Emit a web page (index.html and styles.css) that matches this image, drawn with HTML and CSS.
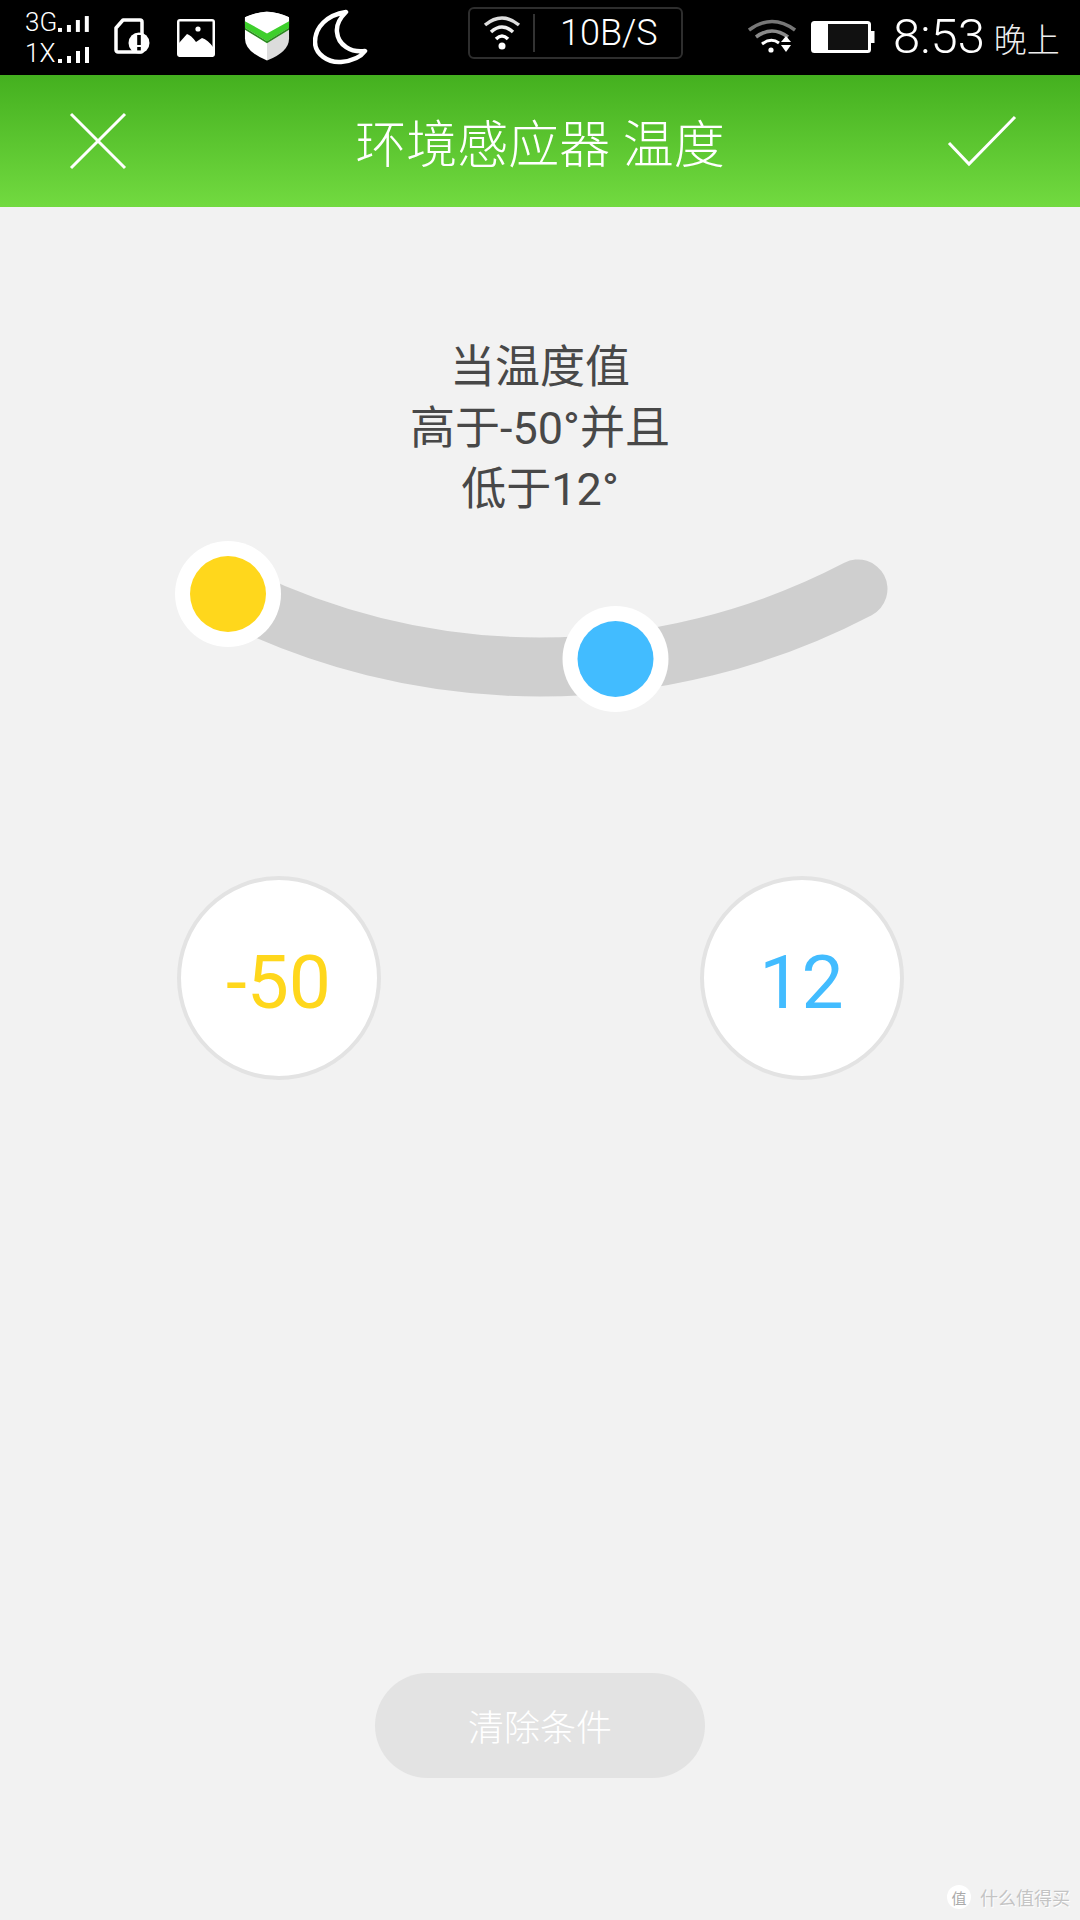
FILE: index.html
```html
<!DOCTYPE html>
<html lang="zh-CN">
<head>
    <meta charset="UTF-8">
    <meta name="viewport" content="width=device-width, initial-scale=1.0">
    <title>环境感应器 温度</title>
    <link rel="stylesheet" href="styles.css">
</head>
<body>
    <!-- Status bar -->
    <div class="statusbar">
        <div class="signal">
            <div class="signal-row">
                <span class="signal-name">3G</span>
                <svg class="signal-bars" width="34" height="18" viewBox="0 0 34 18"><rect x="1" y="13" width="4" height="4" fill="#fff"/><rect x="10" y="10" width="4" height="7" fill="#fff"/><rect x="19" y="5" width="4" height="12" fill="#fff"/><rect x="28" y="1" width="4" height="16" fill="#fff"/></svg>
            </div>
            <div class="signal-row">
                <span class="signal-name">1X</span>
                <svg class="signal-bars" width="34" height="18" viewBox="0 0 34 18"><rect x="1" y="13" width="4" height="4" fill="#fff"/><rect x="10" y="10" width="4" height="7" fill="#fff"/><rect x="19" y="5" width="4" height="12" fill="#fff"/><rect x="28" y="1" width="4" height="16" fill="#fff"/></svg>
            </div>
        </div>

        <svg class="ico-sd" width="36" height="36" viewBox="0 0 36 36">
            <path d="M9 2H26a2 2 0 0 1 2 2V33a1 1 0 0 1-1 1H4a2 2 0 0 1-2-2V10Z" fill="none" stroke="#fff" stroke-width="3.5" stroke-linejoin="round"/>
            <circle cx="25" cy="25" r="10.5" fill="#fff"/>
            <rect x="23.2" y="17" width="3.6" height="10" fill="#000"/>
            <rect x="23.2" y="29" width="3.6" height="3.4" fill="#000"/>
        </svg>

        <svg class="ico-pic" width="40" height="40" viewBox="0 0 40 40">
            <rect x="1" y="1" width="38" height="38" rx="3" fill="#fff"/>
            <rect x="3.5" y="3.5" width="33" height="33" fill="#000"/>
            <path d="M3 25 L11 16 Q15 17 20 24 L26 20 Q32 22 37 29 V39 H3Z" fill="#fff"/>
            <circle cx="22" cy="11" r="2.6" fill="#fff"/>
        </svg>

        <svg class="ico-shield" width="46" height="53" viewBox="0 0 48 54">
            <path d="M24 2 Q36 3 47 8 V30 Q47 44 24 53 Z" fill="#dcdcdc"/>
            <path d="M24 2 Q12 3 1 8 V30 Q1 44 24 53 Z" fill="#fff"/>
            <path d="M1 8 Q24 -3 47 8 V15 L24 28 L1 15 Z" fill="#fff"/>
            <path d="M1 12 L24 25 L47 12 V19 L24 33 L1 19 Z" fill="#3ecf2c"/>
            <path d="M1 19 L24 33 L47 19 V21 L24 35 L1 21 Z" fill="#2a8a1e"/>
        </svg>

        <svg class="ico-moon" width="56" height="56" viewBox="0 0 56 56">
            <path d="M33 3 C14 6 2 18 2 33 C2 45 15 54 28 53 C38 52 47 49 52 42 C38 44 25 36 24 23 C23 15 28 8 33 3 Z" fill="none" stroke="#fff" stroke-width="4.5" stroke-linejoin="round"/>
        </svg>

        <!-- Network speed box -->
        <div class="speed-box">
            <svg class="ico-wifi" width="40" height="38" viewBox="0 0 40 38">
                <path d="M3 11 Q20 -3 37 11" fill="none" stroke="#ddd" stroke-width="3.5"/>
                <path d="M9 18 Q20 8 31 18" fill="none" stroke="#eee" stroke-width="3.5"/>
                <path d="M14 25 Q20 19 26 25" fill="none" stroke="#fff" stroke-width="3.5"/>
                <circle cx="20" cy="32" r="3.5" fill="#fff"/>
            </svg>
            <span class="speed-line"></span>
            <span class="speed-text">10B/S</span>
        </div>

        <svg class="ico-wifi2" width="48" height="36" viewBox="0 0 48 36">
            <path d="M1 11 Q24 -6 47 11" fill="none" stroke="#777" stroke-width="3.5"/>
            <path d="M8 18 Q24 6 40 18" fill="none" stroke="#8a8a8a" stroke-width="3.5"/>
            <path d="M14 25 Q23 18 31 24" fill="none" stroke="#fff" stroke-width="3"/>
            <circle cx="23" cy="31" r="2.6" fill="#fff"/>
            <path d="M38 17 L43 23 H33 Z" fill="#fff"/>
            <path d="M33 26 H43 L38 33 Z" fill="#fff"/>
        </svg>

        <svg class="ico-battery" width="64" height="32" viewBox="0 0 64 32">
            <rect x="1.5" y="1.5" width="57" height="29" rx="2" fill="#111" stroke="#fff" stroke-width="3"/>
            <rect x="3" y="3" width="14" height="26" fill="#fff"/>
            <rect x="60" y="10" width="3.5" height="12" fill="#fff"/>
        </svg>

        <span class="clock">8:53</span>
        <span class="clock-ampm">晚上</span>
    </div>

    <!-- Title bar -->
    <div class="titlebar">
        <svg class="title-icon" width="58" height="58" viewBox="0 0 58 58">
            <path d="M2 2 L56 56 M56 2 L2 56" stroke="#fff" stroke-width="3" fill="none"/>
        </svg>
        <h1>环境感应器 温度</h1>
        <svg class="title-icon" width="70" height="52" viewBox="0 0 70 52">
            <path d="M2 28 L22 49 L68 2" stroke="#fff" stroke-width="3" fill="none"/>
        </svg>
    </div>

    <!-- Main content -->
    <div class="content">
        <p class="desc">当温度值<br>高于-50°并且<br>低于12°</p>

        <svg class="range" width="1080" height="199" viewBox="0 519 1080 199">
            <path d="M222 588 A687 687 0 0 0 858 588" fill="none" stroke="#cfcfcf" stroke-width="59" stroke-linecap="round"/>
            <circle cx="228" cy="593" r="53" fill="#fff"/>
            <circle cx="228" cy="593" r="38" fill="#ffd71c"/>
            <circle cx="615.5" cy="658" r="53" fill="#fff"/>
            <circle cx="615.5" cy="658" r="38" fill="#42bcff"/>
        </svg>

        <div class="values">
            <div class="value low">-50</div>
            <div class="value high">12</div>
        </div>

        <button class="btn-clear">清除条件</button>
    </div>

    <!-- Watermark -->
    <div class="watermark">
        <span class="watermark-logo">值</span>
        <span>什么值得买</span>
    </div>
</body>
</html>
```

FILE: styles.css
```css
* {
    margin: 0;
    padding: 0;
    box-sizing: border-box;
}

body {
    position: relative;
    width: 1080px;
    height: 1920px;
    overflow: hidden;
    font-family: Roboto, "Noto Sans CJK SC", sans-serif;
    background: #f2f2f2;
    color: #444;
}

/* Status bar */
.statusbar {
    display: flex;
    align-items: flex-start;
    height: 75px;
    padding-left: 25px;
    background: #000;
    color: #fff;
}

.signal {
    width: 66px;
    margin-top: 5px;
}

.signal-row {
    display: flex;
    align-items: flex-end;
    justify-content: space-between;
    height: 31px;
}

.signal-name {
    font-size: 26px;
    font-weight: 300;
    line-height: 28px;
}

.signal-bars {
    margin-bottom: 3px;
}

.ico-sd {
    margin: 18px 0 0 23px;
}

.ico-pic {
    margin: 18px 0 0 26px;
}

.ico-shield {
    margin: 9px 0 0 28px;
}

.ico-moon {
    margin: 9px 0 0 23px;
}

.speed-box {
    display: flex;
    align-items: center;
    width: 215px;
    height: 52px;
    margin: 7px 0 0 99px;
    border: 2px solid #2e2e2e;
    border-radius: 6px;
    padding-left: 12px;
}

.speed-line {
    width: 2px;
    height: 38px;
    margin-left: 11px;
    background: #333;
}

.speed-text {
    margin-left: 25px;
    font-size: 36px;
    font-weight: 300;
    color: #fff;
}

.ico-wifi2 {
    margin: 19px 0 0 65px;
}

.ico-battery {
    margin: 21px 0 0 15px;
}

.clock {
    margin: 8px 0 0 18px;
    font-size: 49px;
    font-weight: 300;
    line-height: 58px;
}

.clock-ampm {
    margin: 21px 0 0 9px;
    font-size: 33px;
    font-weight: 300;
    line-height: 40px;
    color: #eee;
}

/* Title bar */
.titlebar {
    display: flex;
    align-items: center;
    justify-content: space-between;
    height: 132px;
    padding: 0 63px 0 69px;
    background: linear-gradient(180deg, #44b01f 0%, #72da40 100%);
}

.titlebar h1 {
    margin-left: 6px;
    font-size: 51px;
    font-weight: 300;
    color: #fff;
}

.title-icon {
    display: block;
}

/* Main content */
.content {
    display: flex;
    flex-direction: column;
    align-items: center;
}

.desc {
    padding-top: 130px;
    font-size: 45px;
    font-weight: 400;
    line-height: 61px;
    text-align: center;
    color: #484848;
}

.range {
    display: block;
}

.values {
    display: flex;
    justify-content: space-between;
    width: 727px;
    margin-top: 157px;
}

.value {
    display: flex;
    align-items: center;
    justify-content: center;
    width: 204px;
    height: 204px;
    padding-top: 7px;
    border: 4px solid #e3e3e3;
    border-radius: 50%;
    background: #fff;
    font-size: 75px;
}

.value.low {
    color: #ffd71c;
}

.value.high {
    color: #42bcff;
}

.btn-clear {
    width: 330px;
    height: 105px;
    margin-top: 593px;
    padding-bottom: 2px;
    border: none;
    border-radius: 53px;
    background: #e3e3e3;
    font-family: inherit;
    font-size: 36px;
    font-weight: 300;
    color: #fff;
}

/* Watermark */
.watermark {
    position: absolute;
    right: 10px;
    bottom: 10px;
    display: flex;
    align-items: center;
    gap: 9px;
    font-size: 18px;
    color: #c4c4c4;
    text-shadow: 1px 1px 0 #fff;
}

.watermark-logo {
    display: flex;
    align-items: center;
    justify-content: center;
    width: 24px;
    height: 24px;
    border-radius: 50%;
    background: #fff;
    font-size: 15px;
    color: #aaa;
    text-shadow: none;
}
```
